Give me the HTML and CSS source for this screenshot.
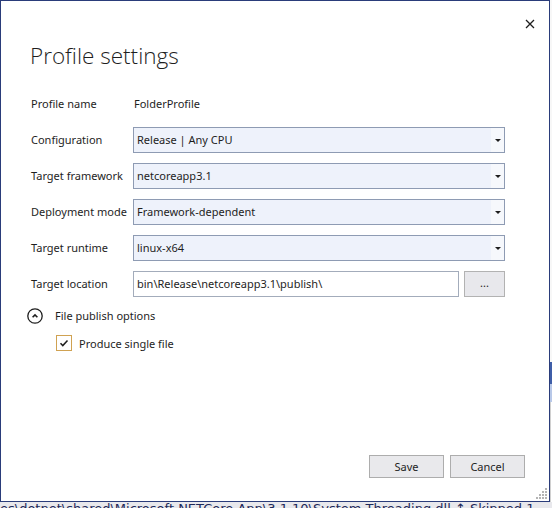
FILE: index.html
```html
<!DOCTYPE html>
<html>
<head>
<meta charset="utf-8">
<link rel="stylesheet" href="styles.css">
</head>
<body>
<div class="screen">
  <div class="dialog">
    <div class="titlebar">
      <span class="close" aria-label="Close">
        <svg width="10" height="10" viewBox="0 0 10 10"><path d="M1 1 L9 9 M9 1 L1 9" stroke="#1e1e1e" stroke-width="1.3" fill="none"/></svg>
      </span>
    </div>
    <h1 class="title">Profile settings</h1>
    <div class="form">
      <div class="label">Profile name</div>
      <div class="value">FolderProfile</div>

      <div class="label">Configuration</div>
      <div class="combo"><span class="combo-text">Release | Any CPU</span><span class="combo-arrow"><i class="tri"></i></span></div>

      <div class="label">Target framework</div>
      <div class="combo"><span class="combo-text">netcoreapp3.1</span><span class="combo-arrow"><i class="tri"></i></span></div>

      <div class="label">Deployment mode</div>
      <div class="combo"><span class="combo-text">Framework-dependent</span><span class="combo-arrow"><i class="tri"></i></span></div>

      <div class="label">Target runtime</div>
      <div class="combo"><span class="combo-text">linux-x64</span><span class="combo-arrow"><i class="tri"></i></span></div>

      <div class="label">Target location</div>
      <div class="path-row"><span class="textbox">bin\Release\netcoreapp3.1\publish\</span><span class="browse">...</span></div>
    </div>

    <div class="expander">
      <svg class="exp-icon" width="16" height="16" viewBox="0 0 16 16"><circle cx="8" cy="8" r="7.2" stroke="#1e1e1e" stroke-width="1.3" fill="none"/><path d="M5.6 9.3 L8 6.9 L10.4 9.3" stroke="#1e1e1e" stroke-width="1.6" fill="none"/></svg>
      <span class="exp-text">File publish options</span>
    </div>

    <div class="check-row">
      <span class="checkbox"><svg width="14" height="14" viewBox="0 0 14 14"><path d="M3.5 7.3 L5.8 9.6 L10.5 4.4" stroke="#1e1e1e" stroke-width="1.5" fill="none"/></svg></span>
      <span class="check-text">Produce single file</span>
    </div>

    <div class="footer">
      <span class="btn">Save</span>
      <span class="btn">Cancel</span>
    </div>

    <svg class="grip" width="12" height="12" viewBox="0 0 12 12">
      <g fill="#b4b4b4">
        <rect x="9" y="0" width="2" height="2"/>
        <rect x="6" y="3" width="2" height="2"/><rect x="9" y="3" width="2" height="2"/>
        <rect x="3" y="6" width="2" height="2"/><rect x="6" y="6" width="2" height="2"/><rect x="9" y="6" width="2" height="2"/>
        <rect x="0" y="9" width="2" height="2"/><rect x="3" y="9" width="2" height="2"/><rect x="6" y="9" width="2" height="2"/><rect x="9" y="9" width="2" height="2"/>
      </g>
    </svg>
  </div>

  <div class="strip">
    <div class="s-top"></div>
    <div class="s-dark"></div>
    <div class="s-light"></div>
    <div class="s-rest"></div>
  </div>

  <div class="console">es\dotnet\shared\Microsoft.NETCore.App\3.1.10\System.Threading.dll ↑ Skipped 1</div>
</div>
</body>
</html>
```

FILE: styles.css
```css
html, body {
  margin: 0;
  padding: 0;
  background: #ffffff;
}

body {
  font-family: "Noto Sans", "Open Sans", sans-serif;
  font-size: 11px;
  color: #1e1e1e;
}

.screen {
  display: grid;
  grid-template-columns: 550px 2px;
  grid-template-rows: 502px 6px;
  width: 552px;
  height: 508px;
  overflow: hidden;
}

.dialog {
  position: relative;
  box-sizing: border-box;
  border: 1px solid #2a3c7a;
  background: #ffffff;
  display: flex;
  flex-direction: column;
  padding: 0 24px 23px 30px;
}

.titlebar {
  display: flex;
  justify-content: flex-end;
  padding: 18px 0 0 0;
  margin-right: -10px;
  height: 10px;
}

.close {
  display: block;
  width: 10px;
  height: 10px;
}
.close svg { display: block; }

.title {
  margin: 11px 0 0 -1px;
  font-family: "Open Sans", "Noto Sans", sans-serif;
  font-weight: 300;
  font-size: 22.5px;
  line-height: 32px;
  color: #1e1e1e;
}

.form {
  margin-top: 19px;
  width: 474px;
  display: grid;
  grid-template-columns: 102px 372px;
  grid-auto-rows: 26px;
  row-gap: 10px;
  align-items: center;
}

.label, .value {
  line-height: 26px;
  white-space: nowrap;
}

.value {
  padding-left: 1px;
}

.combo {
  box-sizing: border-box;
  height: 26px;
  border: 1px solid #8e9bb3;
  background: #eef2fb;
  display: flex;
  align-items: stretch;
}

.combo-text {
  flex: 1;
  padding-left: 3px;
  line-height: 24px;
  white-space: nowrap;
}

.combo-arrow {
  width: 13px;
  background: #f6f8fc;
  display: flex;
  align-items: center;
  justify-content: center;
}

.tri {
  display: block;
  width: 0;
  height: 0;
  border-left: 3px solid transparent;
  border-right: 3px solid transparent;
  border-top: 3px solid #1e1e1e;
  margin-left: 1px;
}

.path-row {
  display: flex;
  gap: 5px;
  height: 26px;
}

.textbox {
  flex: 1;
  box-sizing: border-box;
  border: 1px solid #a3acbb;
  background: #ffffff;
  padding-left: 3px;
  line-height: 24px;
  white-space: nowrap;
}

.browse {
  box-sizing: border-box;
  width: 41px;
  border: 1px solid #b2b2b2;
  background: #e8e8ec;
  text-align: center;
  line-height: 22px;
}

.expander {
  margin-top: 11px;
  margin-left: -4px;
  display: flex;
  align-items: center;
  gap: 12px;
  height: 16px;
}

.exp-icon { display: block; }

.exp-text {
  line-height: 16px;
}

.check-row {
  margin-top: 11px;
  margin-left: 25px;
  display: flex;
  align-items: center;
  gap: 7px;
  height: 16px;
}

.checkbox {
  box-sizing: border-box;
  width: 16px;
  height: 16px;
  border: 1px solid #d0a252;
  background: #ffffff;
  display: flex;
  align-items: center;
  justify-content: center;
}
.checkbox svg { display: block; }

.footer {
  margin-top: auto;
  display: flex;
  justify-content: flex-end;
  gap: 6px;
}

.btn {
  box-sizing: border-box;
  width: 75px;
  height: 23px;
  border: 1px solid #adadad;
  background: #e9e9ec;
  text-align: center;
  line-height: 21px;
}

.grip {
  position: absolute;
  right: 1px;
  bottom: 1px;
  display: block;
}

.strip {
  display: flex;
  flex-direction: column;
}
.s-top { height: 362px; background: #f7f7f7; }
.s-dark { height: 22px; background: #3f5ea8; }
.s-light { height: 18px; background: #b8c8e8; }
.s-rest { flex: 1; background: #ffffff; border-left: 1px solid #d0d0d0; }

.console {
  grid-column: 1 / 3;
  background: #e8e8ec;
  color: #1e2a5a;
  font-family: "DejaVu Sans", sans-serif;
  font-size: 13px;
  line-height: 13px;
  padding-top: 0;
  white-space: nowrap;
  overflow: hidden;
}
```
